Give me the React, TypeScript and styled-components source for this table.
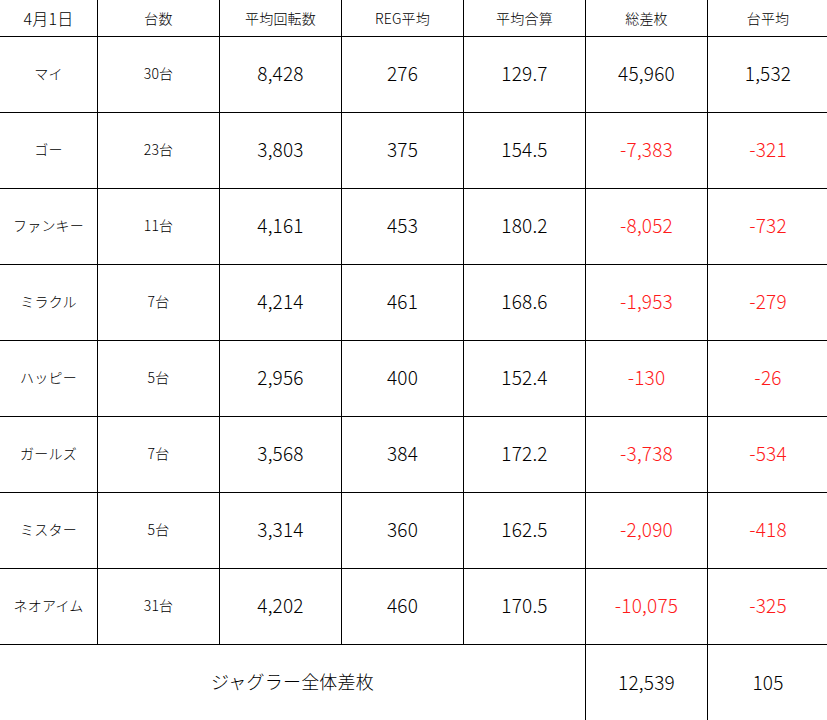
import styled, { createGlobalStyle } from "styled-components"

const GlobalStyle = createGlobalStyle`
    html, body {
        margin: 0;
        padding: 0;
        background: #fff;
        overflow: hidden;
    }
    body {
        font-family: "Noto Sans CJK JP", "Noto Sans", sans-serif;
        color: #000;
    }
`

const Table = styled.div`
    display: grid;
    grid-template-columns: 98px 122px 122px 122px 122px 122px 120px;
    grid-template-rows: 37px repeat(8, 76px) 76px;
    width: 827px;
    height: 720px;
`

const Cell = styled.div<{ $size?: number; $red?: boolean; $last?: boolean; $span?: number; $noBottom?: boolean }>`
    display: flex;
    align-items: center;
    justify-content: center;
    box-sizing: border-box;
    padding-bottom: 4px;
    border-right: ${p => (p.$last ? "none" : "1px solid #000")};
    border-bottom: ${p => (p.$noBottom ? "none" : "1px solid #000")};
    font-size: ${p => p.$size || 15}px;
    font-weight: 300;
    color: ${p => (p.$red ? "#ff1a1a" : "#000")};
    grid-column: ${p => (p.$span ? `span ${p.$span}` : "auto")};
    white-space: nowrap;
    letter-spacing: 0.2px;
`

const HeaderCell = styled(Cell)`
    padding-bottom: 1px;
`

const headers = ["4月1日", "台数", "平均回転数", "REG平均", "平均合算", "総差枚", "台平均"]

const rows = [
    ["マイ", "30台", "8,428", "276", "129.7", "45,960", "1,532"],
    ["ゴー", "23台", "3,803", "375", "154.5", "-7,383", "-321"],
    ["ファンキー", "11台", "4,161", "453", "180.2", "-8,052", "-732"],
    ["ミラクル", "7台", "4,214", "461", "168.6", "-1,953", "-279"],
    ["ハッピー", "5台", "2,956", "400", "152.4", "-130", "-26"],
    ["ガールズ", "7台", "3,568", "384", "172.2", "-3,738", "-534"],
    ["ミスター", "5台", "3,314", "360", "162.5", "-2,090", "-418"],
    ["ネオアイム", "31台", "4,202", "460", "170.5", "-10,075", "-325"],
]

export default function App() {
    return (
        <>
            <GlobalStyle />
            <Table>
                {headers.map((h, i) => (
                    <HeaderCell key={`h${i}`} $size={i === 0 ? 16 : 14} $last={i === 6}>
                        {h}
                    </HeaderCell>
                ))}
                {rows.map(row =>
                    row.map((v, i) => (
                        <Cell
                            key={`${row[0]}${i}`}
                            $size={i < 2 ? 14 : 19}
                            $red={v.startsWith("-")}
                            $last={i === 6}
                        >
                            {v}
                        </Cell>
                    ))
                )}
                <Cell $span={5} $size={18} $noBottom>
                    ジャグラー全体差枚
                </Cell>
                <Cell $size={19} $noBottom>12,539</Cell>
                <Cell $size={19} $noBottom $last>105</Cell>
            </Table>
        </>
    )
}
